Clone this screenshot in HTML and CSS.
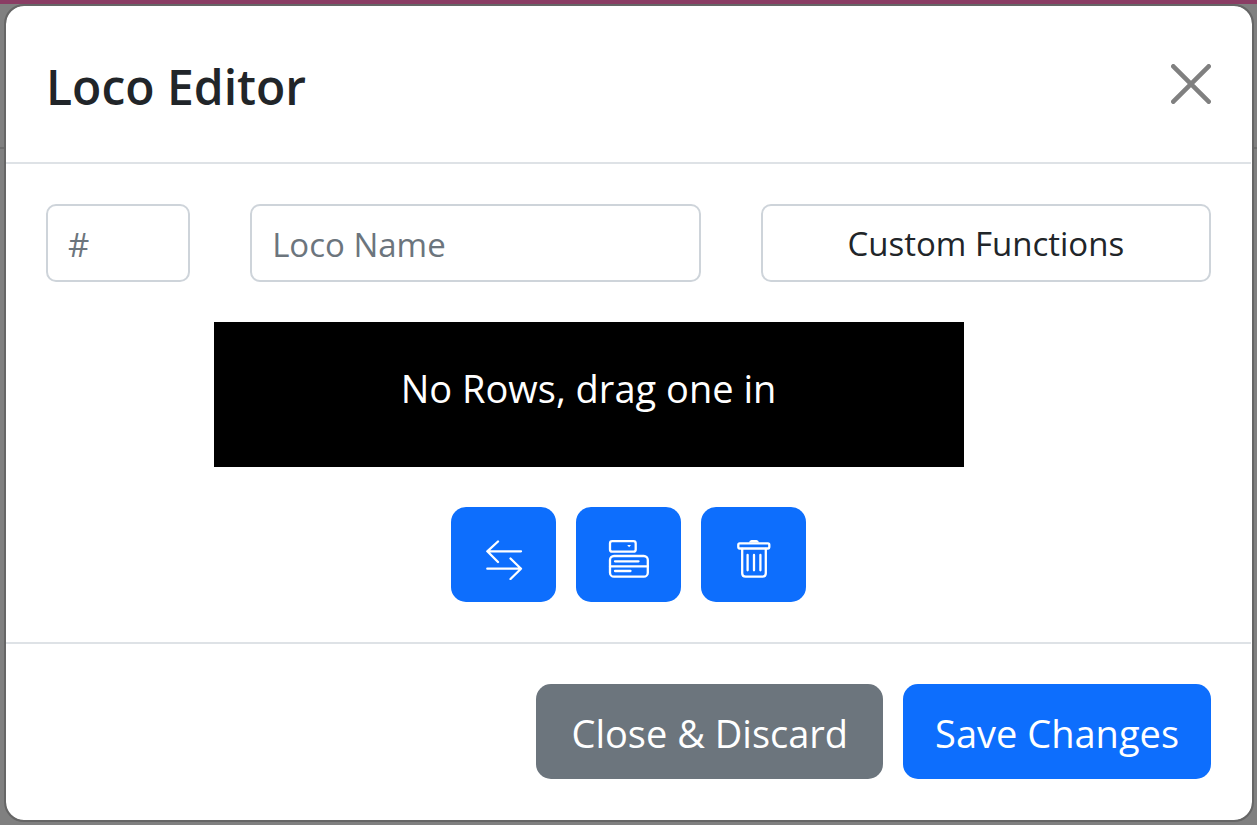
FILE: index.html
```html
<!DOCTYPE html>
<html lang="en">
<head>
<meta charset="utf-8">
<meta name="viewport" content="width=device-width, initial-scale=1">
<title>Loco Editor</title>
<link rel="stylesheet" href="styles.css">
</head>
<body>
<div class="backdrop">
  <div class="modal" role="dialog" aria-labelledby="modal-title">
    <header class="modal-header">
      <h1 class="modal-title" id="modal-title">Loco Editor</h1>
      <button class="close" type="button" aria-label="Close">
        <svg class="close-icon" viewBox="0 0 40 40" aria-hidden="true"><path d="M2.3 2.3 37.7 37.7M37.7 2.3 2.3 37.7"/></svg>
      </button>
    </header>
    <main class="modal-body">
      <div class="fields">
        <input class="field" type="text" placeholder="#" aria-label="Loco number">
        <input class="field" type="text" placeholder="Loco Name" aria-label="Loco name">
        <button class="field field-button" type="button">Custom Functions</button>
      </div>
      <div class="rows">
        <p class="rows-empty">No Rows, drag one in</p>
      </div>
      <div class="tools">
        <button class="tool" type="button" aria-label="Swap">
          <svg class="icon" viewBox="0 0 41 40" aria-hidden="true"><path d="M38 11.3H4.5M15 1.5 4.3 11.3 15 22M4.3 28.7H38M27.5 18.5 38 28.7 27.5 39"/></svg>
        </button>
        <button class="tool" type="button" aria-label="Row">
          <svg class="icon" viewBox="0 0 41 40" aria-hidden="true"><rect x="2" y="1.2" width="25.7" height="10.5" rx="2.2"/><rect x="2" y="16" width="37.8" height="20.7" rx="4"/><path d="M2 26.3H40M7 21.3H30.5M7 31H22.5"/><path class="solid" d="M19.2 5H23L21.1 7.2Z"/></svg>
        </button>
        <button class="tool" type="button" aria-label="Delete">
          <svg class="icon" viewBox="0 0 41 40" aria-hidden="true"><rect x="5.3" y="3.3" width="31" height="5.2" rx="1.4"/><path class="solid" d="M16 2.6Q16.5 0 18.5 0H23.5Q25.5 0 26 2.6Z"/><path d="M9.2 9V33.2Q9.2 36.7 12.7 36.7H29.3Q32.8 36.7 32.8 33.2V9M14.6 15V30.3M21 15V30.3M27.4 15V30.3"/></svg>
        </button>
      </div>
    </main>
    <footer class="modal-footer">
      <button class="btn btn-secondary" type="button">Close &amp; Discard</button>
      <button class="btn btn-primary" type="button">Save Changes</button>
    </footer>
  </div>
</div>
</body>
</html>
```
FILE: styles.css
```css
* {
  box-sizing: border-box;
}

body {
  margin: 0;
  background: #808080;
  color: #212529;
  font-family: "Open Sans", "Noto Sans", sans-serif;
  font-size: 38px;
  line-height: 60px;
}

button,
input {
  margin: 0;
  font: inherit;
  color: inherit;
}

.backdrop {
  min-height: 100vh;
  padding: 0 3px 3px 4px;
  border-top: 4px solid #8a3d64;
  background: linear-gradient(#6e6e6e, #6e6e6e) 0 143px / 100% 2px no-repeat #808080;
}

.modal {
  padding: 0 1px 1px 0;
  border: 2px solid #666;
  border-radius: 20px;
  background: #fff;
  background-clip: padding-box;
}

.modal-header {
  display: flex;
  justify-content: space-between;
  align-items: center;
  padding: 40px;
  border-bottom: 2px solid #dee2e6;
}

.modal-title {
  margin: 0;
  padding-top: 6px;
  font-size: 48px;
  font-weight: 600;
  line-height: 70px;
}

.close {
  display: flex;
  padding: 0;
  border: 0;
  background: none;
}

.close-icon {
  width: 40px;
  height: 40px;
  fill: none;
  stroke: #808080;
  stroke-width: 4.6;
  stroke-linecap: round;
}

.modal-body {
  display: flex;
  flex-direction: column;
  gap: 40px;
  padding: 40px;
}

.fields {
  display: grid;
  grid-template-columns: 8fr 25fr 25fr;
  gap: 60px;
}

.field {
  width: 100%;
  min-width: 0;
  height: 78px;
  padding: 2px 20px 0;
  border: 2px solid #ced4da;
  border-radius: 10px;
  background: #fff;
  font-size: 33px;
}

.field::placeholder {
  color: #6c757d;
  opacity: 1;
}

.field-button {
  text-align: center;
}

.rows {
  display: flex;
  justify-content: center;
  padding-right: 80px;
}

.rows-empty {
  width: 750px;
  max-width: 100%;
  margin: 0;
  padding: 36px 20px 49px;
  background: #000;
  color: #fff;
  text-align: center;
}

.tools {
  display: flex;
  justify-content: center;
  gap: 20px;
}

.tool {
  display: flex;
  padding: 33px 32px 22px;
  border: 0;
  border-radius: 15px;
  background: #0d6efd;
}

.icon {
  width: 41px;
  height: 40px;
  fill: none;
  stroke: #fff;
  stroke-width: 2.3;
  stroke-linecap: round;
  stroke-linejoin: round;
}

.solid {
  fill: #fff;
  stroke: none;
}

.modal-footer {
  display: flex;
  justify-content: flex-end;
  gap: 20px;
  padding: 40px;
  border-top: 2px solid #dee2e6;
}

.btn {
  padding: 19px 32px 16px;
  border: 0;
  border-radius: 15px;
  color: #fff;
}

.btn-secondary {
  padding-inline: 35px;
  background: #6c757d;
}

.btn-primary {
  background: #0d6efd;
}
```
